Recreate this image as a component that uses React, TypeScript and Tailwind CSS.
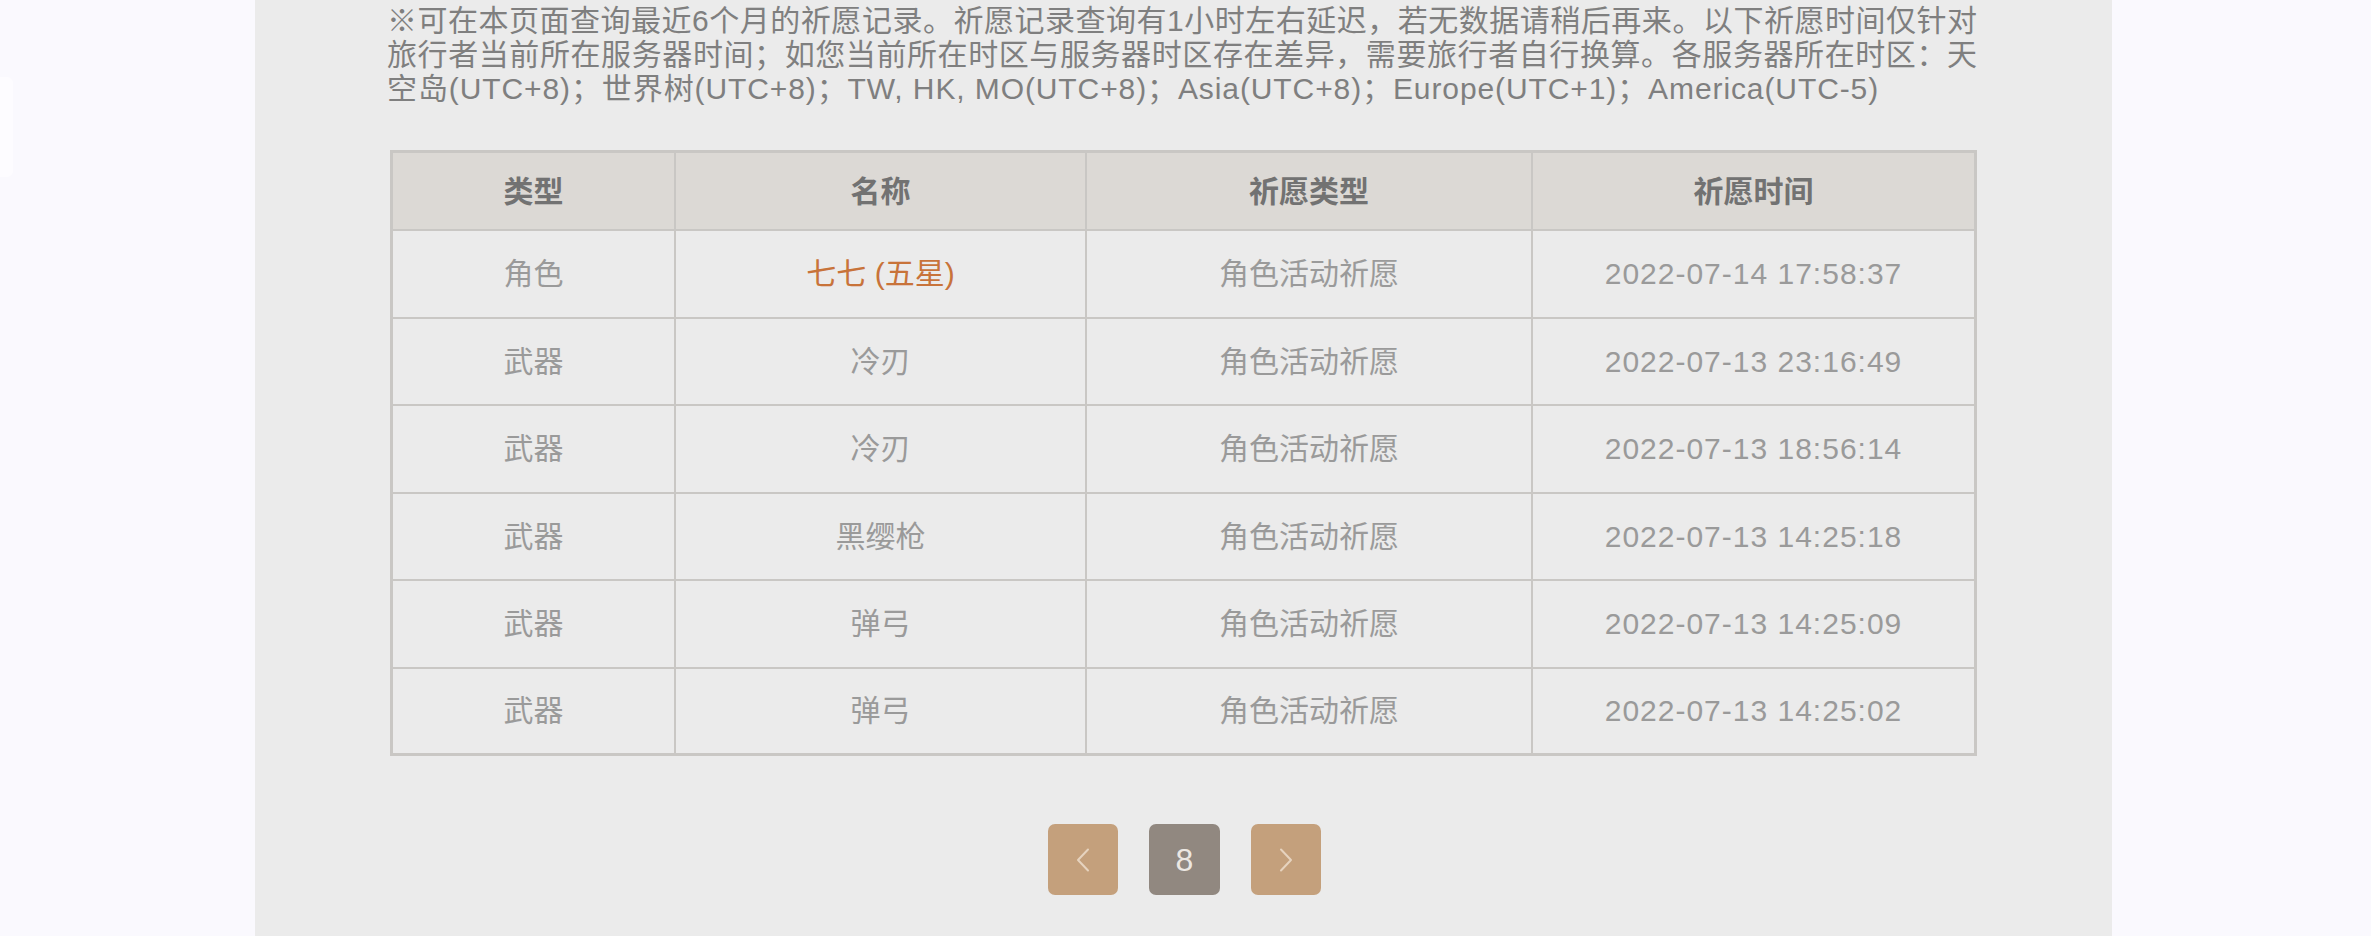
import React from "react";

const rows = [
  { type: "角色", name: "七七 (五星)", gold: true, pool: "角色活动祈愿", time: "2022-07-14 17:58:37" },
  { type: "武器", name: "冷刃", pool: "角色活动祈愿", time: "2022-07-13 23:16:49" },
  { type: "武器", name: "冷刃", pool: "角色活动祈愿", time: "2022-07-13 18:56:14" },
  { type: "武器", name: "黑缨枪", pool: "角色活动祈愿", time: "2022-07-13 14:25:18" },
  { type: "武器", name: "弹弓", pool: "角色活动祈愿", time: "2022-07-13 14:25:09" },
  { type: "武器", name: "弹弓", pool: "角色活动祈愿", time: "2022-07-13 14:25:02" },
];

const font = { fontFamily: '"Liberation Sans", "Noto Sans CJK SC", sans-serif' };

export default function App() {
  return (
    <div className="relative w-[2371px] h-[936px] overflow-hidden bg-[#faf9fe]" style={font}>
      <div className="absolute left-0 top-[77px] w-[13px] h-[100px] rounded-r-[6px] bg-[#fdfcff]" />
      <div className="ml-[255px] w-[1857px] h-[936px] bg-[#ebebeb] pt-[4px] pl-[132px] pr-[135px]">
        <div className="text-[30px] leading-[34px] text-[#7f7f7f] w-[1590px]">
          <div className="whitespace-nowrap text-justify [text-align-last:justify]">
            ※可在本页面查询最近6个月的祈愿记录。祈愿记录查询有1小时左右延迟，若无数据请稍后再来。以下祈愿时间仅针对
          </div>
          <div className="whitespace-nowrap text-justify [text-align-last:justify]">
            旅行者当前所在服务器时间；如您当前所在时区与服务器时区存在差异，需要旅行者自行换算。各服务器所在时区：天
          </div>
          <div className="whitespace-nowrap tracking-[0.9px]">
            空岛(UTC+8)；世界树(UTC+8)；TW, HK, MO(UTC+8)；Asia(UTC+8)；Europe(UTC+1)；America(UTC-5)
          </div>
        </div>

        <div className="mt-[44px] ml-[3px] w-[1587px] border-l-[3px] border-t-[3px] border-[#c9c7c4]">
          <div className="grid grid-cols-[283px_411px_446px_444px] h-[78px] bg-[#dcd9d5] text-[30px] font-bold text-[#727272]">
            {["类型", "名称", "祈愿类型", "祈愿时间"].map((h, i) => (
              <div
                key={h}
                className={`flex items-center justify-center border-b-2 border-[#c9c7c4] ${i === 3 ? "border-r-[3px]" : "border-r-2"}`}
              >
                {h}
              </div>
            ))}
          </div>
          {rows.map((r, idx) => {
            const last = idx === rows.length - 1;
            const bb = last ? "border-b-[3px]" : "border-b-2";
            return (
              <div
                key={idx}
                className="grid grid-cols-[283px_411px_446px_444px] h-[87.5px] text-[30px] text-[#9a9a9a]"
              >
                <div className={`flex items-center justify-center border-r-2 ${bb} border-[#c9c7c4]`}>
                  {r.type}
                </div>
                <div
                  className={`flex items-center justify-center border-r-2 ${bb} border-[#c9c7c4] ${r.gold ? "text-[#c8733a]" : ""}`}
                >
                  {r.name}
                </div>
                <div className={`flex items-center justify-center border-r-2 ${bb} border-[#c9c7c4]`}>
                  {r.pool}
                </div>
                <div className={`flex items-center justify-center border-r-[3px] ${bb} border-[#c9c7c4] tracking-[1px]`}>
                  {r.time}
                </div>
              </div>
            );
          })}
        </div>

        <div className="mt-[68px] flex justify-center gap-[31px] ml-[5px]">
          <button className="w-[70px] h-[71px] rounded-[7px] bg-[#c4a07c] flex items-center justify-center">
            <svg width="14" height="24" viewBox="0 0 14 24" fill="none">
              <path d="M12 1.5 L2 12 L12 22.5" stroke="#e6d3bf" strokeWidth="2" strokeLinecap="round" strokeLinejoin="round" />
            </svg>
          </button>
          <div className="w-[71px] h-[71px] rounded-[7px] bg-[#918880] flex items-center justify-center text-[32px] text-[#ece7e2]">
            8
          </div>
          <button className="w-[70px] h-[71px] rounded-[7px] bg-[#c4a07c] flex items-center justify-center">
            <svg width="14" height="24" viewBox="0 0 14 24" fill="none">
              <path d="M2 1.5 L12 12 L2 22.5" stroke="#e6d3bf" strokeWidth="2" strokeLinecap="round" strokeLinejoin="round" />
            </svg>
          </button>
        </div>
      </div>
    </div>
  );
}
